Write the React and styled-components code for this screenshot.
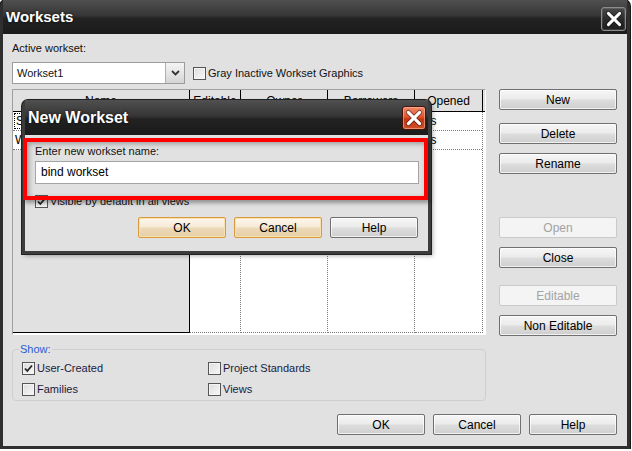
import styled, { createGlobalStyle } from "styled-components";

const GlobalStyle = createGlobalStyle`
  html, body {
    margin: 0;
    padding: 0;
    background: #fff;
  }
  body {
    font-family: "Liberation Sans", Arial, sans-serif;
    font-size: 11px;
    color: #111;
  }
  * {
    box-sizing: border-box;
  }
`;

const Window = styled.div`
  position: relative;
  width: 630px;
  height: 449px;
  background: #e1e1e1;
  border: 3px solid #2f2f2f;
  border-top: none;
  border-radius: 6px 6px 0 0;
  box-shadow: 0 0 0 1px #1a1a1a;
  display: flex;
  flex-direction: column;
`;

const TitleBar = styled.div`
  height: ${(p) => p.$height}px;
  flex-shrink: 0;
  display: flex;
  align-items: flex-start;
  justify-content: space-between;
  padding-left: 3px;
  background: linear-gradient(#505050 0%, #363636 45%, #222 55%, #1b1b1b 100%);
  color: #fff;
`;

const Title = styled.div`
  font-weight: bold;
  font-size: ${(p) => p.$size}px;
  line-height: ${(p) => p.$height}px;
  text-shadow: 0 0 3px rgba(0, 0, 0, 0.8);
`;

const CloseButton = styled.div`
  width: ${(p) => p.$w}px;
  height: ${(p) => p.$h}px;
  margin: ${(p) => p.$top}px ${(p) => p.$right}px 0 0;
  border: 1px solid ${(p) => (p.$red ? "#4a1408" : "#8c8c8c")};
  border-radius: 3px;
  display: flex;
  align-items: center;
  justify-content: center;
  background: ${(p) =>
    p.$red
      ? "linear-gradient(#f08a6a 0%, #e0542e 45%, #c43512 55%, #d2502a 100%)"
      : "linear-gradient(#4a4a4a 0%, #2a2a2a 50%, #1e1e1e 100%)"};
  box-shadow: inset 0 0 0 1px ${(p) => (p.$red ? "rgba(255,200,180,0.5)" : "rgba(255,255,255,0.12)")};
`;

const Body = styled.div`
  flex: 1;
  padding: 7px 10px 0 9px;
  display: flex;
  flex-direction: column;
`;

const Label = styled.div`
  line-height: 14px;
  color: ${(p) => p.$color || "#111"};
`;

const SelectRow = styled.div`
  display: flex;
  align-items: center;
  margin-top: 7px;
  gap: 8px;
`;

const Select = styled.div`
  width: 173px;
  height: 22px;
  border: 1px solid #9c9c9c;
  background: #fff;
  display: flex;
  align-items: center;
  justify-content: space-between;
  padding-left: 4px;
`;

const DropButton = styled.div`
  width: 19px;
  height: 20px;
  border-left: 1px solid #b0b0b0;
  background: linear-gradient(#f4f4f4 0%, #e6e6e6 50%, #d4d4d4 100%);
  display: flex;
  align-items: center;
  justify-content: center;
`;

const CheckItem = styled.label`
  display: flex;
  align-items: center;
  gap: 2px;
  height: 13px;
  line-height: 13px;
  white-space: nowrap;
  color: ${(p) => p.$color || "#111"};
`;

const Box = styled.span`
  width: 13px;
  height: 13px;
  flex-shrink: 0;
  border: 1px solid #555;
  background: linear-gradient(135deg, #dcdcdc 0%, #f8f8f8 100%);
  box-shadow: inset 0 0 0 1px #f4f4f4;
  display: flex;
  align-items: center;
  justify-content: center;
`;

const MainRow = styled.div`
  display: grid;
  grid-template-columns: 474px 118px;
  column-gap: 13px;
  margin-top: 5px;
`;

const LeftCol = styled.div`
  display: flex;
  flex-direction: column;
`;

const Table = styled.div`
  height: 246px;
  border: 1px solid;
  border-color: #a0a0a0 #fff #fff #a0a0a0;
  background: #fff;
  display: flex;
  flex-direction: column;
`;

const HeadRow = styled.div`
  display: grid;
  grid-template-columns: 177px 51px 87px 87px 68px 1fr;
  height: 22px;
  flex-shrink: 0;
  border-bottom: 1px solid #000;
  background: #e1e1e1;
`;

const HeadCell = styled.div`
  border-right: ${(p) => (p.$last ? "none" : "1px solid #000")};
  display: flex;
  align-items: center;
  justify-content: center;
  font-size: 12px;
  color: #000;
`;

const GridBody = styled.div`
  flex: 1;
  display: grid;
  grid-template-columns: 177px 51px 87px 87px 68px 1fr;
`;

const NameCol = styled.div`
  background: #e1e1e1;
  border-right: 1px solid #000;
  border-bottom: 1px solid #000;
  margin-bottom: 1px;
`;

const DataCol = styled.div`
  background: #fff;
  border-right: ${(p) => (p.$filler ? "none" : "1px dotted #7a7a7a")};
  border-bottom: ${(p) => (p.$filler ? "none" : "1px dotted #7a7a7a")};
  margin-bottom: 1px;
`;

const Cell = styled.div`
  height: 19px;
  line-height: 18px;
  background: #fff;
  border-bottom: 1px dotted #7a7a7a;
  padding-left: 2px;
  font-size: 12px;
  white-space: nowrap;
  overflow: hidden;
  color: #000;
`;

const Focus = styled.span`
  outline: 1px dotted #000;
  padding: 0 1px;
`;

const Group = styled.fieldset`
  margin: 7px 0 0 0;
  padding: 6px 9px 4px 9px;
  border: 1px solid #cfcfcf;
  border-radius: 4px;
  display: grid;
  grid-template-columns: 186px 1fr;
  row-gap: 8px;
`;

const Legend = styled.legend`
  padding: 0 1px;
  margin-left: -3px;
  line-height: 14px;
  color: #2a5cd8;
`;

const ButtonStack = styled.div`
  display: flex;
  flex-direction: column;
`;

const Button = styled.div`
  width: ${(p) => p.$w || 118}px;
  height: 21px;
  margin-top: ${(p) => p.$mt || 0}px;
  border: 1px solid ${(p) => (p.$disabled ? "#cacaca" : p.$hot ? "#d99a3e" : "#707070")};
  border-radius: 2px;
  display: flex;
  align-items: center;
  justify-content: center;
  font-size: 12px;
  color: ${(p) => (p.$disabled ? "#a3a3a3" : "#000")};
  background: ${(p) =>
    p.$disabled
      ? "#f4f4f4"
      : p.$hot
      ? "linear-gradient(#fdf7ee 0%, #f6ead6 48%, #ecd9b8 52%, #e6cfa6 100%)"
      : "linear-gradient(#f6f6f6 0%, #ebebeb 48%, #dddddd 52%, #cfcfcf 100%)"};
  box-shadow: ${(p) =>
    p.$disabled
      ? "none"
      : p.$hot
      ? "inset 0 0 0 1px #fbe0ac"
      : "inset 0 0 0 1px rgba(255,255,255,0.7)"};
`;

const BottomRow = styled.div`
  display: flex;
  justify-content: flex-end;
  gap: 8px;
  margin-top: ${(p) => p.$mt}px;
  padding-right: ${(p) => p.$pr || 0}px;
`;

const Dialog = styled.div`
  position: absolute;
  left: 19px;
  top: 100px;
  width: 409px;
  height: 154px;
  background: #e1e1e1;
  border: 3px solid #3c3c3c;
  border-top: none;
  border-radius: 6px 6px 0 0;
  box-shadow: 0 0 0 1px #222, 2px 2px 4px rgba(0, 0, 0, 0.3);
  display: flex;
  flex-direction: column;
`;

const DialogBody = styled.div`
  position: relative;
  flex: 1;
  padding: 9px 9px 0 10px;
  display: flex;
  flex-direction: column;
`;

const TextInput = styled.div`
  height: 23px;
  margin-top: 3px;
  border: 1px solid #a5a5a5;
  background: #fff;
  padding-left: 5px;
  line-height: 21px;
  font-size: 12px;
  color: #000;
`;

const CheckRow = styled.div`
  margin-top: 11px;
`;

const Highlight = styled.div`
  position: absolute;
  left: -2px;
  top: 3px;
  width: 405px;
  height: 62px;
  border: 4px solid #ff0000;
  box-shadow: 2px 3px 4px rgba(0, 0, 0, 0.35), inset 2px 2px 5px rgba(0, 0, 0, 0.3);
  pointer-events: none;
`;

const CloseX = ({ size, stroke }) => (
  <svg width={size} height={size} viewBox="0 0 16 16">
    <path d="M3 3 L13 13 M13 3 L3 13" stroke="rgba(0,0,0,0.5)" strokeWidth={stroke + 1.4} strokeLinecap="round" />
    <path d="M3 3 L13 13 M13 3 L3 13" stroke="#fff" strokeWidth={stroke} strokeLinecap="round" />
  </svg>
);

const Check = () => (
  <svg width="11" height="11" viewBox="0 0 11 11">
    <path d="M2 5.5 L4.3 8 L9 2.5" fill="none" stroke="#222" strokeWidth="1.8" />
  </svg>
);

const CheckBox = ({ checked, children, color }) => (
  <CheckItem $color={color}>
    <Box>{checked && <Check />}</Box>
    <span>{children}</span>
  </CheckItem>
);

const rows = [
  { name: "Shared Levels and Grids", editable: "Yes", owner: "", borrowers: "", opened: "Yes" },
  { name: "Workset1", editable: "Yes", owner: "", borrowers: "", opened: "Yes" },
];

const columns = [
  { key: "editable", title: "Editable" },
  { key: "owner", title: "Owner" },
  { key: "borrowers", title: "Borrowers" },
  { key: "opened", title: "Opened" },
];

export default function App() {
  return (
    <>
      <GlobalStyle />
      <Window>
        <TitleBar $height={34}>
          <Title $size={15} $height={34}>Worksets</Title>
          <CloseButton $w={25} $h={24} $top={7} $right={1}>
            <CloseX size={18} stroke={2.6} />
          </CloseButton>
        </TitleBar>

        <Body>
          <Label>Active workset:</Label>
          <SelectRow>
            <Select>
              <span>Workset1</span>
              <DropButton>
                <svg width="9" height="6" viewBox="0 0 9 6">
                  <path d="M1 1 L4.5 4.5 L8 1" fill="none" stroke="#333" strokeWidth="1.8" />
                </svg>
              </DropButton>
            </Select>
            <CheckBox>Gray Inactive Workset Graphics</CheckBox>
          </SelectRow>

          <MainRow>
            <LeftCol>
              <Table>
                <HeadRow>
                  <HeadCell>Name</HeadCell>
                  {columns.map((c) => (
                    <HeadCell key={c.key}>{c.title}</HeadCell>
                  ))}
                  <HeadCell $last />
                </HeadRow>
                <GridBody>
                  <NameCol>
                    {rows.map((r, i) => (
                      <Cell key={r.name}>{i === 0 ? <Focus>{r.name}</Focus> : r.name}</Cell>
                    ))}
                  </NameCol>
                  {columns.map((c) => (
                    <DataCol key={c.key}>
                      {rows.map((r) => (
                        <Cell key={r.name}>{r[c.key]}</Cell>
                      ))}
                    </DataCol>
                  ))}
                  <DataCol $filler />
                </GridBody>
              </Table>

              <Group>
                <Legend>Show:</Legend>
                <CheckBox checked color="#1a1a40">User-Created</CheckBox>
                <CheckBox color="#1a1a40">Project Standards</CheckBox>
                <CheckBox color="#1a1a40">Families</CheckBox>
                <CheckBox color="#1a1a40">Views</CheckBox>
              </Group>
            </LeftCol>

            <ButtonStack>
              <Button>New</Button>
              <Button $mt={13}>Delete</Button>
              <Button $mt={9}>Rename</Button>
              <Button $mt={43} $disabled>Open</Button>
              <Button $mt={9}>Close</Button>
              <Button $mt={17} $disabled>Editable</Button>
              <Button $mt={9}>Non Editable</Button>
            </ButtonStack>
          </MainRow>

          <BottomRow $mt={13}>
            <Button $w={88}>OK</Button>
            <Button $w={88}>Cancel</Button>
            <Button $w={88}>Help</Button>
          </BottomRow>
        </Body>

        <Dialog>
          <TitleBar $height={35}>
            <Title $size={16} $height={36}>New Workset</Title>
            <CloseButton $red $w={24} $h={24} $top={6} $right={2}>
              <CloseX size={18} stroke={2.8} />
            </CloseButton>
          </TitleBar>
          <DialogBody>
            <Label>Enter new workset name:</Label>
            <TextInput>bind workset</TextInput>
            <CheckRow>
              <CheckBox checked>Visible by default in all views</CheckBox>
            </CheckRow>
            <BottomRow $mt={9} $pr={1}>
              <Button $w={88} $hot>OK</Button>
              <Button $w={88} $hot>Cancel</Button>
              <Button $w={88}>Help</Button>
            </BottomRow>
            <Highlight />
          </DialogBody>
        </Dialog>
      </Window>
    </>
  );
}
